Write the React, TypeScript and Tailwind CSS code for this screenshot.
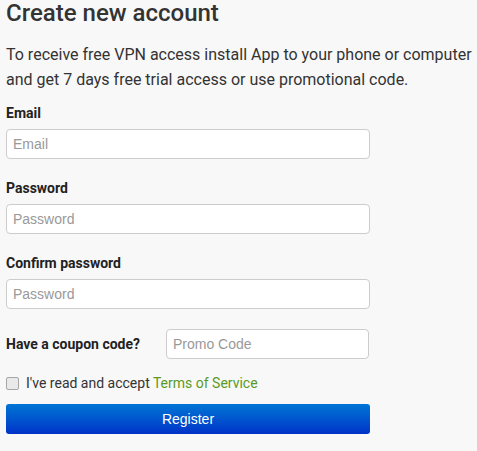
import React from "react";

const labelCls =
  "block text-[14px] leading-[20px] font-bold text-[#222] font-['Roboto',sans-serif]";
const inputCls =
  "block h-[30px] rounded-[4px] border border-[#cccccc] bg-white px-[6px] text-[14px] text-[#555] placeholder:text-[#999] font-['Liberation_Sans',Arial,sans-serif] outline-none";

export default function App() {
  return (
    <div className="min-h-[451px] w-[477px] bg-[#f8f8f8] px-[6px] font-['Roboto',sans-serif] text-[#333]">
      <h1 className="text-[24px] leading-[26px] font-medium text-[#333]">Create new account</h1>
      <p className="mt-[16px] text-[16px] leading-[25px] text-[#333] whitespace-nowrap">
        To receive free VPN access install App to your phone or computer
        <br />
        and get 7 days free trial access or use promotional code.
      </p>

      <div className="mt-[11px] w-[364px]">
        <label className={labelCls}>Email</label>
        <input className={`${inputCls} mt-[6px] w-[364px]`} placeholder="Email" />

        <label className={`${labelCls} mt-[19px]`}>Password</label>
        <input className={`${inputCls} mt-[6px] w-[364px]`} placeholder="Password" type="password" />

        <label className={`${labelCls} mt-[19px]`}>Confirm password</label>
        <input className={`${inputCls} mt-[6px] w-[364px]`} placeholder="Password" type="password" />

        <div className="mt-[20px] flex items-center">
          <span className={`${labelCls} w-[160px]`}>Have a coupon code?</span>
          <input className={`${inputCls} w-[203px]`} placeholder="Promo Code" />
        </div>

        <div className="mt-[14px] flex h-[20px] items-center">
          <span className="inline-block h-[13px] w-[13px] rounded-[2px] border border-[#a6a6a6] bg-[#e9e9e9]" />
          <span className="ml-[7px] text-[14px] leading-[20px] text-[#333]">
            I&apos;ve read and accept <a className="text-[#5a9a1e]">Terms of Service</a>
          </span>
        </div>

        <button className="mt-[11px] block h-[30px] w-[364px] rounded-[3px] bg-linear-to-b from-[#0074d4] to-[#0030c8] text-[14px] text-white font-['Liberation_Sans',Arial,sans-serif]">
          Register
        </button>
      </div>
    </div>
  );
}
